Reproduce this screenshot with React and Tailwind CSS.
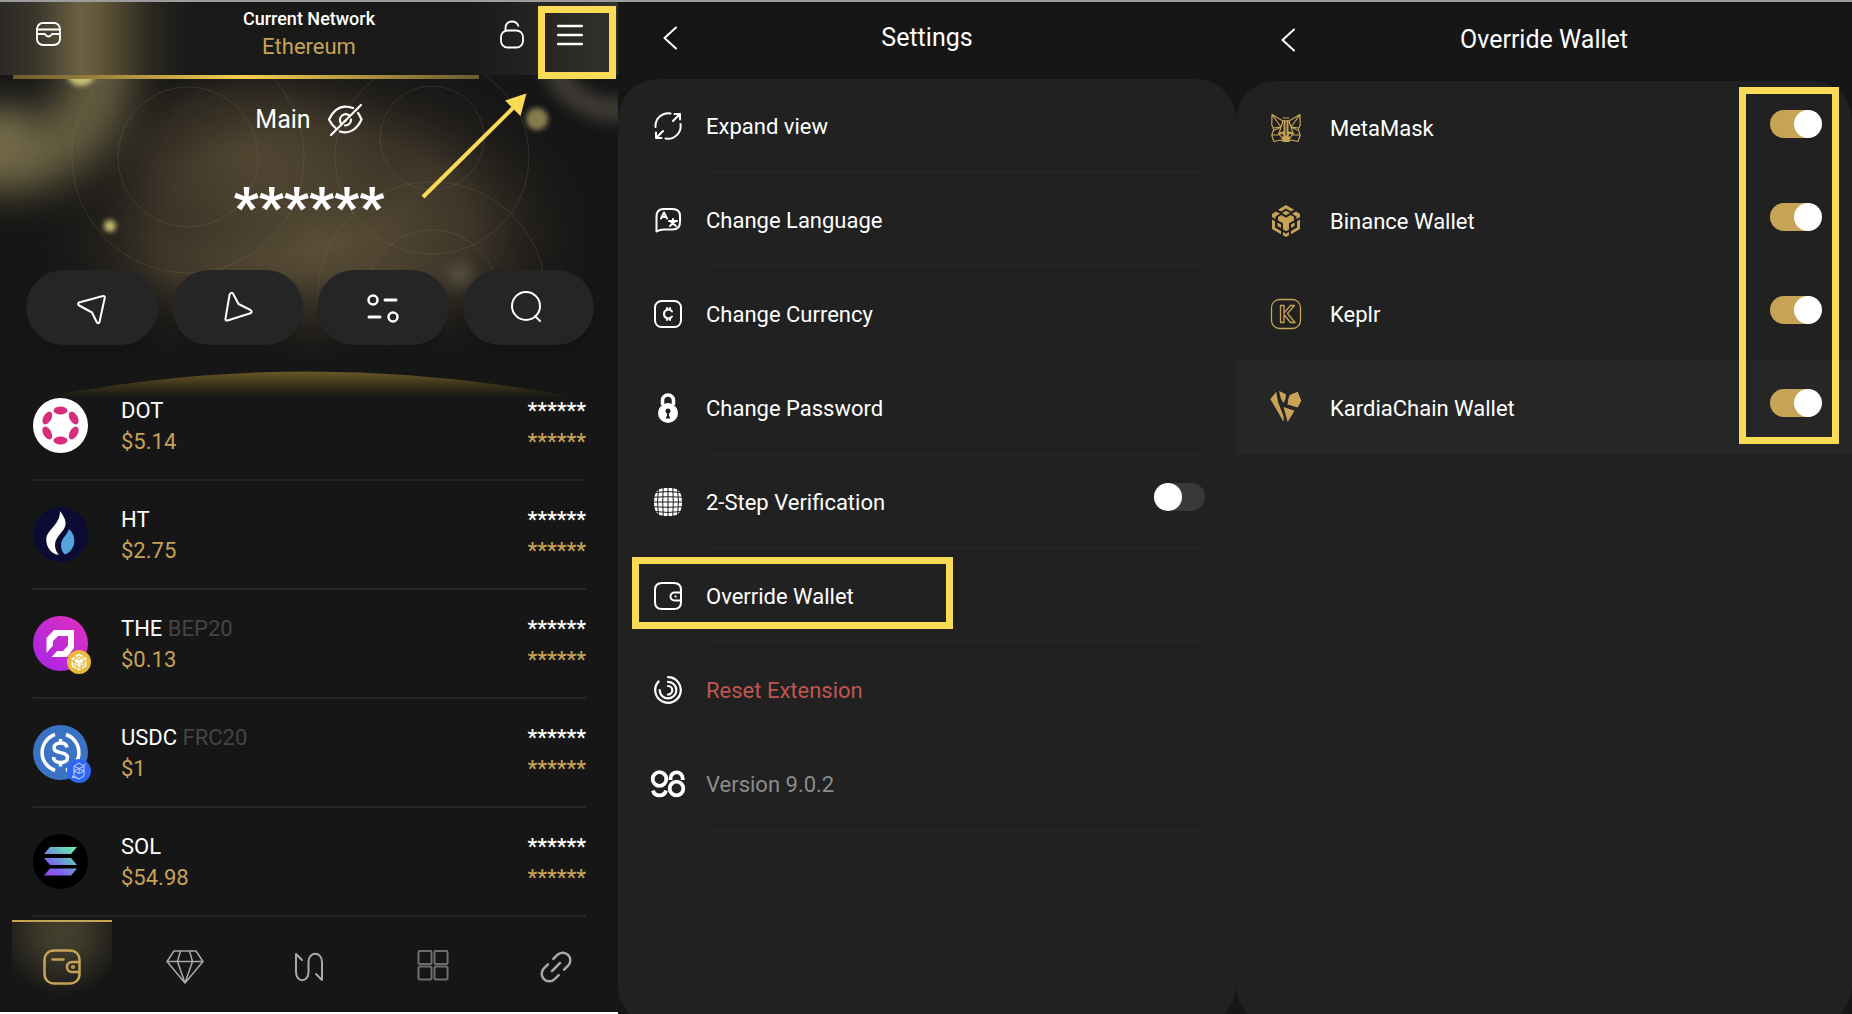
import { useState } from "react";

const ROBOTO = "font-['Roboto',sans-serif]";

function Svg({ w = 28, h = 28, box, children, className = "", sw = 2 }) {
  return (
    <svg
      width={w}
      height={h}
      viewBox={box || `0 0 ${w} ${h}`}
      fill="none"
      stroke="currentColor"
      strokeWidth={sw}
      strokeLinecap="round"
      strokeLinejoin="round"
      className={`shrink-0 ${className}`}
      aria-hidden="true"
    >
      {children}
    </svg>
  );
}

/* ---------- shared controls ---------- */

function Switch({ id, defaultOn }) {
  const [on, setOn] = useState(defaultOn);
  return (
    <input
      id={id}
      type="checkbox"
      role="switch"
      checked={on}
      onChange={() => setOn(!on)}
      className="h-7 w-[51px] shrink-0 cursor-pointer appearance-none rounded-full bg-[#393939] before:block before:size-7 before:rounded-full before:bg-white checked:bg-[#c6a355] checked:before:translate-x-6"
    />
  );
}

function BackButton() {
  return (
    <button type="button" aria-label="Back" className="ml-9 flex size-8 items-center justify-center">
      <Svg w={14} h={24} sw={2}>
        <path d="M13 1.500 1.500 12 13 22.500" />
      </Svg>
    </button>
  );
}

function PanelHeader({ title }) {
  return (
    <header className="grid h-[77px] shrink-0 grid-cols-[1fr_auto_1fr] items-center pb-1.5">
      <BackButton />
      <h1 className="text-[25px] font-normal">{title}</h1>
    </header>
  );
}

/* ---------- home panel ---------- */

function HeroGlow() {
  return (
    <svg
      className="absolute inset-x-0 top-0 h-[400px] w-full"
      viewBox="0 0 618 400"
      preserveAspectRatio="none"
      aria-hidden="true"
    >
      <defs>
        <radialGradient id="warm">
          <stop offset="0" stopColor="#5e5338" />
          <stop offset=".55" stopColor="#453b2c" stopOpacity=".85" />
          <stop offset="1" stopColor="#1a1916" stopOpacity="0" />
        </radialGradient>
        <linearGradient id="smear" x1="0" x2="1" y1="0" y2="0">
          <stop offset="0" stopColor="#2b2924" />
          <stop offset=".18" stopColor="#39352b" />
          <stop offset=".42" stopColor="#6a6042" />
          <stop offset=".52" stopColor="#625839" />
          <stop offset=".8" stopColor="#2a2720" />
          <stop offset="1" stopColor="#191918" />
        </linearGradient>
        <linearGradient id="corner" x1="0" x2="1" y1="0" y2="0">
          <stop offset="0" stopColor="#191918" />
          <stop offset="1" stopColor="#34322d" />
        </linearGradient>
        <linearGradient id="fade" x1="0" x2="0" y1="0" y2="1">
          <stop offset="0" stopColor="#161616" stopOpacity="0" />
          <stop offset="1" stopColor="#161616" />
        </linearGradient>
        <linearGradient id="arc" x1="0" x2="0" y1="370" y2="396" gradientUnits="userSpaceOnUse">
          <stop offset="0" stopColor="#675526" />
          <stop offset=".5" stopColor="#3b3219" />
          <stop offset="1" stopColor="#161616" />
        </linearGradient>
        <filter id="b3" x="-100%" y="-100%" width="300%" height="300%">
          <feGaussianBlur stdDeviation="2.500" />
        </filter>
        <filter id="b8" x="-100%" y="-100%" width="300%" height="300%">
          <feGaussianBlur stdDeviation="7" />
        </filter>
        <filter id="b20" x="-100%" y="-100%" width="300%" height="300%">
          <feGaussianBlur stdDeviation="20" />
        </filter>
      </defs>
      <rect width="618" height="400" fill="#161616" />
      <ellipse cx="315" cy="232" rx="285" ry="185" fill="url(#warm)" />
      <ellipse cx="250" cy="150" rx="180" ry="105" fill="url(#warm)" opacity=".5" />
      <circle cx="8" cy="66" r="92" stroke="#7a6f4c" strokeWidth="66" fill="none" filter="url(#b20)" opacity=".8" />
      <ellipse cx="2" cy="136" rx="34" ry="26" fill="#7d7350" filter="url(#b20)" />
      <circle cx="616" cy="40" r="68" stroke="#46433a" strokeWidth="24" fill="none" filter="url(#b8)" opacity=".8" />
      <g fill="none" stroke="#8a7f62" strokeOpacity=".22" strokeWidth="1">
        <circle cx="188" cy="155" r="70" />
        <circle cx="188" cy="155" r="116" />
        <circle cx="432" cy="136" r="52" />
        <circle cx="432" cy="155" r="97" />
        <circle cx="432" cy="294" r="114" />
        <circle cx="432" cy="294" r="66" />
        <path d="M90 342q4 18 11 28M138 342q12 22 34 32M286 342q-4 18-11 28M236 342q-8 18-28 30" />
      </g>
      <circle cx="81" cy="69" r="15" fill="#c9bf78" filter="url(#b3)" />
      <circle cx="110" cy="224" r="6" fill="#c5bb6a" filter="url(#b3)" />
      <circle cx="537" cy="117" r="11" fill="#857c4e" filter="url(#b3)" />
      <circle cx="460" cy="274" r="12" fill="#5a5545" filter="url(#b8)" opacity=".9" />
      <rect y="270" width="618" height="90" fill="url(#fade)" />
      <rect y="360" width="618" height="40" fill="#161616" />
      <path d="M30 398 Q309 341 588 398Z" fill="url(#arc)" />
      <rect width="618" height="73" fill="#191918" />
      <rect width="190" height="73" fill="url(#smear)" />
      <rect x="470" width="148" height="73" fill="url(#corner)" />
    </svg>
  );
}

const ACTIONS = [
  {
    label: "Send",
    icon: (
      <Svg w={34} h={34}>
        <path d="M4 11.500 28 5c1-.3 2 .4 1.800 1.500L24.500 31c-.4 1.500-2 1.600-2.700.3L17 21.500 4.200 14.500c-1.400-.8-1.400-2.500-.2-3Z" />
      </Svg>
    ),
  },
  {
    label: "Receive",
    icon: (
      <Svg w={34} h={34} className="ml-1">
        <path d="M7.500 4c.6-2.700 3-2.800 4-.5L16.500 13 28.500 19c1.600.9 1.600 2.700 0 3.200L5.500 29.500c-1.500.4-2.300-.5-2-2Z" />
      </Svg>
    ),
  },
  {
    label: "Manage",
    icon: (
      <Svg w={34} h={34} sw={2.5}>
        <circle cx="7" cy="9" r="4.500" />
        <circle cx="27" cy="26" r="4.500" />
        <path d="M19 9h11M3 26h11" strokeWidth="3" />
      </Svg>
    ),
  },
  {
    label: "Search",
    icon: (
      <Svg w={34} h={34} className="-ml-1">
        <circle cx="17" cy="15" r="14" />
        <path d="m26 25 5 5" />
      </Svg>
    ),
  },
];

/* hexagonal cube mark on a 28 x 32 grid */
const CUBE =
  "M14 0 22 4.700 19 6.500 14 3.500 9 6.500 6 4.700ZM14 5.700 18 8 14 10.300 10 8ZM0 12V9L4 6.500 8 8.800 3.500 11.500V14ZM28 12V9L24 6.500 20 8.800 24.500 11.500V14ZM6 12 9.300 10 14 12.700 18.700 10 22 12V15.500L17 18.300V24.500L14 26.300 11 24.500V18.300L6 15.500ZM0 14.500 3 16.200V22.500L9 26V29.300L0 24ZM28 14.500 25 16.200V22.500L19 26V29.300L28 24ZM5.500 17.500 9 19.500V23L5.500 21ZM22.500 17.500 19 19.500V23L22.500 21ZM11 27 14 28.700 17 27V30.200L14 32 11 30.200Z";

const TOKENS = [
  {
    symbol: "DOT",
    price: "$5.14",
    logo: (
      <>
        <circle cx="27.500" cy="27.500" r="27.500" fill="#fff" />
        <g fill="#d82d7d">
          <ellipse cx="27.500" cy="12.500" rx="7" ry="4" />
          <ellipse cx="27.500" cy="42.500" rx="7" ry="4" />
          <ellipse cx="14.300" cy="20" rx="7" ry="4" transform="rotate(-60 14.300 20)" />
          <ellipse cx="40.700" cy="20" rx="7" ry="4" transform="rotate(60 40.700 20)" />
          <ellipse cx="14.300" cy="35" rx="7" ry="4" transform="rotate(60 14.300 35)" />
          <ellipse cx="40.700" cy="35" rx="7" ry="4" transform="rotate(-60 40.700 35)" />
        </g>
      </>
    ),
  },
  {
    symbol: "HT",
    price: "$2.75",
    logo: (
      <>
        <circle cx="27.500" cy="27.500" r="27.500" fill="#0b0b33" />
        <path d="M27 4c2 3 6 8 5.600 13C32 25 21.500 29 22 39c.3 4 2.300 7 3.700 9-7.500-1-12.400-8-12.400-15C13.300 22 27 19 27 4Z" fill="#fff" />
        <path d="M36 22c3 3 5.300 6 5.300 12S37 46 32 47.500c-2.500-2-4-5-4-9C28 31 34.500 28 36 22Z" fill="#55a4dd" />
      </>
    ),
  },
  {
    symbol: "THE",
    tag: "BEP20",
    price: "$0.13",
    logo: (
      <>
        <defs>
          <linearGradient id="the" x1="0" y1="1" x2="1" y2="0">
            <stop offset=".2" stopColor="#b127e0" />
            <stop offset=".9" stopColor="#dc2fc0" />
          </linearGradient>
        </defs>
        <circle cx="27.500" cy="27.500" r="27.500" fill="url(#the)" />
        <path d="M21 14h20v18l-7 9H18.500L24 35h6l5-5.500V20H25l-5 5v4.500L13.500 37V22Z" fill="#fff" />
        <circle cx="46" cy="46" r="12" fill="#e9b93c" />
        <path d={CUBE} fill="#fff" transform="translate(38.600 37.500) scale(.53)" />
      </>
    ),
  },
  {
    symbol: "USDC",
    tag: "FRC20",
    price: "$1",
    logo: (
      <>
        <circle cx="27.500" cy="27.500" r="27.500" fill="#3b73c4" />
        <path d="M22 9.500a19 19 0 0 0 0 36M33 9.500a19 19 0 0 1 0 36" fill="none" stroke="#fff" strokeWidth="3.500" />
        <path
          d="M34 22.500c-.5-3-3-4.500-6.500-4.500s-6.500 1.800-6.500 4.800c0 6.700 13.500 3 13.500 10 0 3-3 4.700-7 4.700s-7-2-7-5.500M27.500 14v4M27.500 37.500v4"
          fill="none"
          stroke="#fff"
          strokeWidth="3.500"
        />
        <circle cx="46" cy="46" r="12" fill="#2f66ef" />
        <path
          d="M41 41l5-3 5 3v10l-5 3-5-3zM41 41l5 2.500 5-2.500M41 46l5-2.500 5 2.500-5 2.500zM46 43.500v5M39 52l2 1M53 39l-2 1M46 54l-7-3"
          fill="none"
          stroke="#c5d5ff"
          strokeWidth="1"
        />
      </>
    ),
  },
  {
    symbol: "SOL",
    price: "$54.98",
    logo: (
      <>
        <defs>
          <linearGradient id="sol" gradientUnits="userSpaceOnUse" x1="14" y1="44" x2="40" y2="10">
            <stop offset="0" stopColor="#9345f5" />
            <stop offset=".3" stopColor="#7f62ee" />
            <stop offset=".65" stopColor="#66b5c8" />
            <stop offset="1" stopColor="#6df5a0" />
          </linearGradient>
        </defs>
        <circle cx="27.500" cy="27.500" r="27.500" fill="#000" />
        <path d="M17 13h27l-6 7H11ZM11 24h27l6 7H17ZM17 34.500h27l-6 7H11Z" fill="url(#sol)" />
      </>
    ),
  },
];

const NAV = [
  {
    label: "Wallet",
    icon: (
      <Svg w={38} h={36} sw={2.5}>
        <path d="M36.500 13V11.500c0-6-3.500-10-10-10h-15c-6.500 0-10 4-10 10v13c0 6 3.500 10 10 10h15c6.500 0 10-4 10-10V23M36.500 13H29a5 5 0 0 0 0 10h7.500zM9.500 10.500h11" />
        <circle cx="30" cy="18" r=".8" />
      </Svg>
    ),
  },
  {
    label: "Collectibles",
    icon: (
      <Svg w={38} h={34} sw={1.5}>
        <path d="M8 1h22l7 10.500L19 33 1 11.500ZM1 11.500h36M14.500 1l-3 10.500L19 33l7.500-21.500-3-10.500" />
      </Svg>
    ),
  },
  {
    label: "Swap",
    icon: (
      <Svg w={30} h={30} sw={2}>
        <path d="m8 8-6-6v18c0 11 12.500 11 12.500 0V10c0-11 13.500-11 13.500 0v18l-6-6" />
      </Svg>
    ),
  },
  {
    label: "Apps",
    icon: (
      <Svg w={32} h={34} sw={2} className="text-[#6e6e6e]">
        <rect x="1.500" y="1" width="13" height="13" rx="1" />
        <rect x="17.500" y="1" width="13" height="13" rx="1" />
        <rect x="1.500" y="16.500" width="13" height="13" rx="1" />
        <rect x="17.500" y="16.500" width="13" height="13" rx="1" />
      </Svg>
    ),
  },
  {
    label: "Connect",
    icon: (
      <Svg w={38} h={38} box="2 2 30 30" sw={2} className="-rotate-45">
        <path d="M14 23H9.500a6 6 0 0 1 0-12H14M20 11h4.500a6 6 0 0 1 0 12H20M12.500 17h9" />
      </Svg>
    ),
  },
];

function HomePanel() {
  return (
    <section className="relative flex flex-col overflow-hidden border-b-2 border-white bg-[#161616]">
      <HeroGlow />
      <header className="relative grid h-[73px] grid-cols-[1fr_auto_1fr] items-start pt-1">
        <button type="button" aria-label="Inbox" className="mt-4 ml-9 w-fit">
          <Svg w={25} h={24} sw={1.8}>
            <rect x="1" y="1" width="23" height="22" rx="6" />
            <path d="M1 7.500h23M1 12h7.500c1.500 0 1 2.500 4 2.500s2.500-2.500 4-2.500H24" />
          </Svg>
        </button>
        <div className="text-center">
          <p className="text-lg leading-[26px] font-medium">Current Network</p>
          <p className="text-[22px] leading-[30px] text-[#c6a355]">Ethereum</p>
        </div>
        <div className="flex justify-end">
          <button type="button" aria-label="Lock" className="mt-3.5 mr-3.5 h-fit">
            <Svg w={24} h={29} sw={1.8}>
              <rect x="1" y="10.500" width="22" height="17" rx="6.500" />
              <path d="M5.500 10.500V8C5.500 4 8 1.500 12 1.500c3.300 0 5.300 1.500 6.300 4.300" />
            </Svg>
          </button>
          <button
            type="button"
            aria-label="Menu"
            className="mr-0.5 flex h-[73px] w-[78px] items-center justify-center border-[7px] border-[#fadb56] pr-3.5 pb-4"
          >
            <Svg w={26} h={22} sw={2.5}>
              <path d="M1 2h24M1 11h24M1 20h24" />
            </Svg>
          </button>
        </div>
      </header>
      <div className="relative mr-[139px] ml-[13px] h-1 bg-linear-to-r from-[#6a5a30] via-[#f6cf50] to-[#6a5a30]" />

      <div className="relative flex flex-col items-center pt-6">
        <div className="flex items-center gap-4">
          <h1 className="text-[25px] leading-[34px] font-normal">Main</h1>
          <button type="button" aria-label="Show balance">
            <Svg w={36} h={32} sw={2.2}>
              <path d="M26 4C15 0 7 5 2 15.500c2 4 4 6.500 6.500 8.500M31 9c1.500 1.800 2.500 4 3.500 6.500C30 25.500 22 30.500 13 27.500M22.500 11.500c-5.500-4-12 2-8.500 8M24 15.500c.3 3.500-2.500 6-6 6M19 15.500c0 1-.5 1.500-1.500 1.500M34 1 4 31" />
            </Svg>
          </button>
        </div>
        <p className="pt-[38px] pb-[31px] text-[54px] leading-[64px] font-black">******</p>
      </div>

      <div className="relative grid grid-cols-4 gap-3.5 pr-6 pb-[27px] pl-[26px]">
        {ACTIONS.map((a) => (
          <button
            key={a.label}
            type="button"
            aria-label={a.label}
            className="flex h-[75px] items-center justify-center rounded-[38px] bg-[#252525] shadow-lg"
          >
            {a.icon}
          </button>
        ))}
      </div>

      <ul className="relative pr-8 pl-[33px]">
        {TOKENS.map((t) => (
          <li key={t.symbol} className="flex h-[109px] items-center border-b-2 border-[#262626]">
            <svg width="60" height="60" viewBox="0 0 60 60" className="mt-[26px] shrink-0 self-start" aria-hidden="true">
              {t.logo}
            </svg>
            <div className="ml-7 flex-1 text-[22px] leading-[31px]">
              <p>
                {t.symbol}
                {t.tag && <span className="text-[#444]"> {t.tag}</span>}
              </p>
              <p className="text-[#c6a355]">{t.price}</p>
            </div>
            <div className="text-right text-[22px] leading-[31px] font-medium">
              <p>******</p>
              <p className="text-[#c6a355]">******</p>
            </div>
          </li>
        ))}
      </ul>

      <nav className="relative mt-auto grid grid-cols-5">
        {NAV.map((n, i) => (
          <a
            key={n.label}
            href="#"
            aria-label={n.label}
            aria-current={i === 0 ? "page" : undefined}
            className={
              i === 0
                ? "mx-3 flex h-[92px] items-center justify-center border-t-2 border-[#c6a355] bg-[radial-gradient(circle_at_50%_12%,#45412f_0,#3b3829_25%,#161616_68%)] text-[#c6a355]"
                : "mx-3 flex h-[92px] items-center justify-center border-t-2 border-transparent text-[#a8a8a8]"
            }
          >
            {n.icon}
          </a>
        ))}
      </nav>

      <svg
        className="absolute top-[84px] right-[87px] text-[#fadb56]"
        width="116"
        height="116"
        viewBox="0 0 116 116"
        aria-hidden="true"
      >
        <path d="M8 111 98 22" stroke="currentColor" strokeWidth="4" />
        <path d="M110 9 92 15l13 13Z" fill="currentColor" stroke="currentColor" strokeWidth="2" />
      </svg>
    </section>
  );
}

/* ---------- settings panel ---------- */

const GRID = [4.500, 9.200, 14, 18.800, 23.500];

const SETTINGS = [
  {
    label: "Expand view",
    icon: (
      <Svg>
        <path d="M16.500 1.500A12.800 12.800 0 0 0 1.500 15M11.500 26.500A12.800 12.800 0 0 0 26.500 12M19 9l7-7M20.500 2H26v5.500M9 19l-7 7M2 20.500V26h5.500" />
      </Svg>
    ),
  },
  {
    label: "Change Language",
    icon: (
      <Svg>
        <path d="M2.500 25.500v-15C2.500 5.500 5 3 9.500 3h9C23.500 3 26 5.500 26 10v6c0 5-2.500 7.500-7.500 7.500H10c-3.500 0-5 .5-7.500 2Z" />
        <path d="m7 12.500 3-6 3 6M8.500 11h3" />
        <path d="M15 15h8M19 13v2M21.500 15l-5.500 5M17 16l5 4" />
      </Svg>
    ),
  },
  {
    label: "Change Currency",
    icon: (
      <Svg>
        <rect x="1" y="1" width="26" height="26" rx="6.500" />
        <path d="M18 11.500c-2-3-8-2.500-8 2.500s6 5.500 8 2.500M13 8v2M16 8v2M13 18v2M16 18v2" />
      </Svg>
    ),
  },
  {
    label: "Change Password",
    icon: (
      <Svg h={30}>
        <path d="M8.500 12V7.500a5.500 5.500 0 0 1 11 0V12" strokeWidth="3.500" strokeLinecap="butt" />
        <circle cx="14" cy="20" r="10" fill="currentColor" stroke="none" />
        <circle cx="14" cy="18" r="2.500" fill="#212121" stroke="none" />
        <path d="M14 18v6M12 24.500h4" stroke="#212121" strokeLinecap="butt" />
      </Svg>
    ),
  },
  {
    label: "2-Step Verification",
    toggle: true,
    icon: (
      <Svg>
        <path
          d="M14 0c5 0 8 .5 10 2 2.500 2 4 6 4 12s-1.500 10-4 12c-2 1.500-5 2-10 2s-8-.5-10-2c-2.500-2-4-6-4-12S1.500 4 4 2c2-1.500 5-2 10-2Z"
          fill="currentColor"
          stroke="none"
        />
        <g stroke="#212121" strokeWidth="1" strokeLinecap="butt">
          {GRID.map((v) => (
            <path
              key={v}
              d={`M0 ${v}Q14 ${v - (14 - v) * 0.2} 28 ${v}M${v} 0Q${v - (14 - v) * 0.2} 14 ${v} 28`}
            />
          ))}
        </g>
      </Svg>
    ),
  },
  {
    label: "Override Wallet",
    marked: true,
    icon: (
      <Svg>
        <path d="M27 11V8c0-4.500-2.500-7-7-7H8C3.500 1 1 3.500 1 8v12c0 4.500 2.500 7 7 7h12c4.500 0 7-2.500 7-7v-2M27 10.500h-6.500a4 4 0 0 0 0 8H27zM21.500 14.500h.2" />
      </Svg>
    ),
  },
  {
    label: "Reset Extension",
    tone: "text-[#bf5650]",
    icon: (
      <Svg sw={2.2}>
        <path d="M14 1.200a12.800 12.800 0 1 1-9.500 4.200M14 5.800a8.300 8.300 0 1 1-8.300 8.200M14 10a4.300 4.300 0 0 1 0 8.600" />
      </Svg>
    ),
  },
  {
    label: "Version 9.0.2",
    tone: "text-[#8c8c8c]",
    icon: (
      <Svg w={36} h={28} sw={3.8} className="-mx-1">
        <g strokeLinecap="butt">
          <circle cx="9.500" cy="9" r="6.800" />
          <circle cx="26.500" cy="18.500" r="6.800" />
          <path d="M3 20.500c1.500 6.500 11.500 6.500 13 0M20.500 10V8.500a6 6 0 0 1 12.200 0V10" />
        </g>
      </Svg>
    ),
  },
];

function SettingsPanel() {
  return (
    <section className="flex flex-col">
      <PanelHeader title="Settings" />
      <ul className="-mb-3 flex-1 rounded-[40px] bg-[#212121] pr-[31px] pl-9">
        {SETTINGS.map((s) => {
          const body = s.toggle ? (
            <>
              <label htmlFor="two-step" className="flex-1">
                {s.label}
              </label>
              <span className="flex pb-2.5">
                <Switch id="two-step" defaultOn={false} />
              </span>
            </>
          ) : (
            <button type="button" className={`flex-1 text-left ${s.tone || ""}`}>
              {s.label}
            </button>
          );
          return (
            <li key={s.label} className="relative flex h-[94px] items-center gap-6">
              <span className="flex w-7 justify-center">{s.icon}</span>
              <div className="flex h-full flex-1 items-center border-b-2 border-[#252525] pt-0.5 text-[22px]">{body}</div>
              {s.marked && (
                <span className="pointer-events-none absolute top-2 -left-[22px] h-[72px] w-[321px] border-[7px] border-[#fadb56]" />
              )}
            </li>
          );
        })}
      </ul>
    </section>
  );
}

/* ---------- override wallet panel ---------- */

const WALLETS = [
  {
    label: "MetaMask",
    icon: (
      <Svg w={30} h={30} sw={1.2}>
        <path d="M1 1.500 12 8h6l11-6.500M1 1.500 0.800 12l2 4-2 6.500L3 28.500l6.500-1.500 3.500 1.500h4l3.500-1.500 6.500 1.500 2.200-6-2-6.500 2-4-.2-10.500M2 3l8 11-8 1M28 3l-8 11 8 1M12 5h6M12 8l-2 6-2 6.500 3 4.500M18 8l2 6 2 6.500-3 4.500M1 22h7M29 22h-7M10 14l-6 3M20 14l6 3" />
        <path d="M13.500 8v16M16.500 8v16M8 20.500l4-1 1.500 3M22 20.500l-4-1-1.500 3" strokeWidth="2" />
        <path d="m11 24.500 4-1.500 4 1.500-1.500 3.500h-5z" fill="currentColor" />
      </Svg>
    ),
  },
  {
    label: "Binance Wallet",
    icon: (
      <Svg w={28} h={32}>
        <path d={CUBE} fill="currentColor" stroke="none" />
      </Svg>
    ),
  },
  {
    label: "Keplr",
    icon: (
      <Svg w={32} h={32} sw={1.3}>
        <rect x="1.500" y="1.500" width="29" height="29" rx="8" />
        <path d="M10.500 7.500h3.500v7.500l6.500-7.500h4L17.500 15.500l7.500 9h-4.500L14 16.500v8h-3.500z" />
      </Svg>
    ),
  },
  {
    label: "KardiaChain Wallet",
    active: true,
    icon: (
      <Svg w={32} h={32}>
        <g fill="currentColor" stroke="none">
          <path d="M6.300.7.3 8 13.700 31 13.500 25 8 11Z" />
          <path d="M9 0 16 3.300 15.500 8 13.500 12 11 8Z" />
          <path d="M19.700 4 27.700.7 31.300 9.700 27.700 16.500 17.500 13.500 18 9Z" />
          <path d="M13.500 16 24.500 19.700 17.700 31Z" />
        </g>
      </Svg>
    ),
  },
];

function OverridePanel() {
  return (
    <section className="flex flex-col pt-0.5">
      <PanelHeader title="Override Wallet" />
      <ul className="relative -mb-3 flex-1 rounded-[40px] bg-[#212121]">
        {WALLETS.map((w) => {
          const id = w.label.toLowerCase().replace(/\s/g, "-");
          return (
            <li
              key={w.label}
              className={
                w.active
                  ? "flex h-[94px] items-center bg-[#262626] pr-[31px] pl-[34px]"
                  : "flex h-[93px] items-center pr-[31px] pl-[34px]"
              }
            >
              <span className="flex w-8 justify-center text-[#c6a355]">{w.icon}</span>
              <label htmlFor={id} className="ml-7 flex-1 pt-0.5 text-[22px]">
                {w.label}
              </label>
              <span className="flex pb-2">
                <Switch id={id} defaultOn />
              </span>
            </li>
          );
        })}
        <li
          aria-hidden="true"
          className="pointer-events-none absolute top-1.5 right-[13px] h-[357px] w-[100px] border-[7px] border-[#fadb56]"
        />
      </ul>
    </section>
  );
}

export default function App() {
  return (
    <main
      className={`${ROBOTO} grid min-h-screen grid-cols-[618fr_618fr_616fr] overflow-hidden border-t-2 border-[#9c9c9c] bg-[#161616] text-white`}
    >
      <HomePanel />
      <SettingsPanel />
      <OverridePanel />
    </main>
  );
}
